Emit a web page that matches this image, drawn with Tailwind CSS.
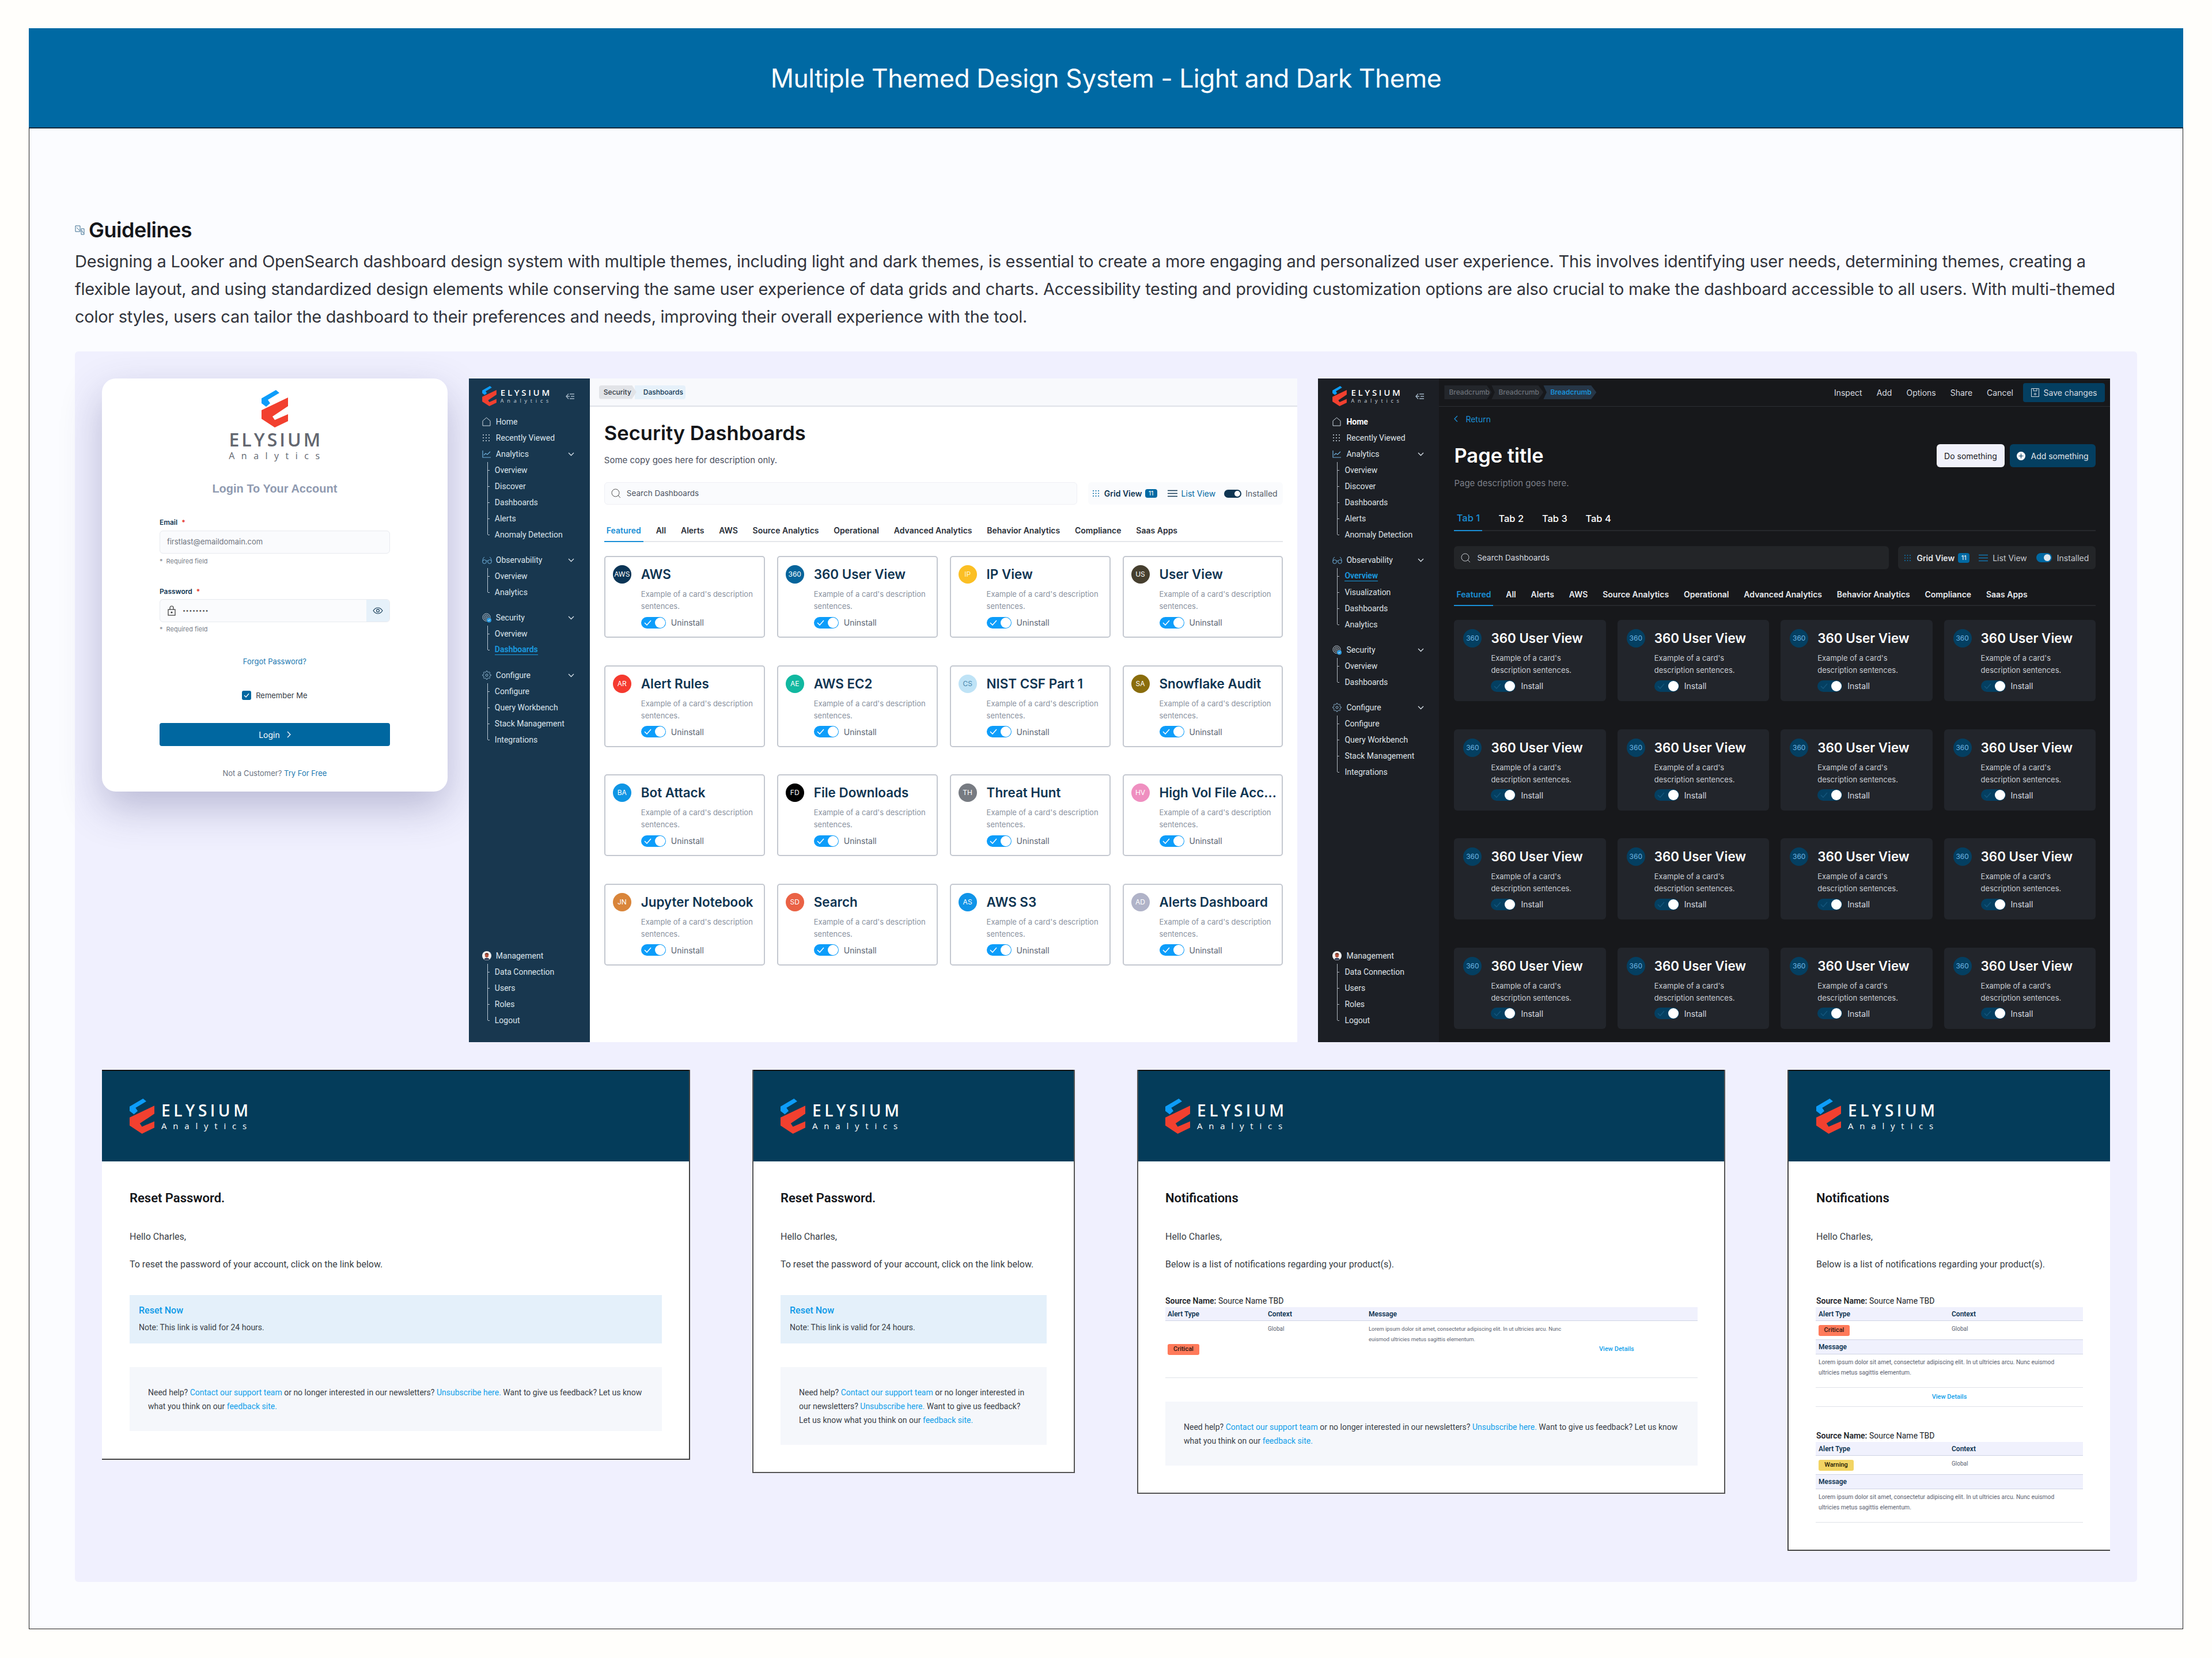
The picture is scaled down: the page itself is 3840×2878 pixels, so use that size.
<!DOCTYPE html>
<html lang="en">
<head>
    <meta charset="UTF-8">
    <title>Multiple Themed Design System</title>
    <script src="https://cdn.jsdelivr.net/npm/@tailwindcss/browser@4"></script>
</head>
<body class="bg-[#fffefb] w-[3840px] h-[2878px] pt-[49px] pl-[50px] overflow-hidden [font-family:Inter,sans-serif]">

<div class="w-[3740px] h-[2779px] bg-[#fbfcff] border border-[#222] border-t-0">

    <header class="h-[174px] -mx-px pt-[3px] bg-[#0069a3] flex items-center justify-center text-white text-[44.5px] -tracking-[0.5px] border-b-2 border-[#0b2a3d]">
        Multiple Themed Design System - Light and Dark Theme
    </header>

    <section class="pl-[79px] pt-[154px]">
        <h2 class="flex items-center gap-[7px] text-[36px] leading-[44px] font-semibold text-[#14161a] -tracking-[0.5px]">
            <svg class="w-[17px] h-[17px]" viewBox="0 0 17 17" fill="none" stroke="#3b6d8f" stroke-width="1"><path d="M1 1h8v10H1zM11 6h5v10h-5zM3 4l5 5M12 9l3 5"/></svg>
            Guidelines
        </h2>
        <p class="mt-[9px] w-[3580px] text-[29px] leading-[48px] text-[#32353d] -tracking-[0.27px]">Designing a Looker and OpenSearch dashboard design system with multiple themes, including light and dark themes, is essential to create a more engaging and personalized user experience. This involves identifying user needs, determining themes, creating a flexible layout, and using standardized design elements while conserving the same user experience of data grids and charts. Accessibility testing and providing customization options are also crucial to make the dashboard accessible to all users. With multi-themed color styles, users can tailor the dashboard to their preferences and needs, improving their overall experience with the tool.</p>
    </section>

    <section class="ml-[79px] mt-[36px] w-[3580px] h-[2136px] bg-[#f0f0fe] rounded-md pl-[47px] pr-[47px] pt-[47px]">

        <div class="flex gap-[36px] h-[1152px] items-start">

            <!-- login -->
            <div class="w-[600px] h-[717px] mr-px bg-white rounded-[24px] shadow-[0_28px_70px_rgba(60,60,120,0.3)] flex flex-col items-center pt-[20px]">
                <div id="login-logo" class="flex flex-col items-center"></div>
                <h3 class="mt-[34px] text-[20px] leading-[24px] font-bold text-[#8f9ab0] [font-family:'Liberation_Sans',sans-serif]">Login To Your Account</h3>
                <div class="w-[400px] mt-[39px]">
                    <label class="block text-[12px] leading-[16px] font-semibold text-[#0f3552]">Email <span class="text-[#e5342b] ml-[4px]">*</span></label>
                    <div class="mt-[6px] h-[40px] flex items-center px-[12px] bg-[#fafbfd] border border-[#e8eaef] rounded-md text-[13px] text-[#70757f]">firstlast@emaildomain.com</div>
                    <p class="mt-[6px] text-[11px] leading-[14px] text-[#7a7f8a]">*&nbsp;&nbsp;Required field</p>
                    <label class="block mt-[38px] text-[12px] leading-[16px] font-semibold text-[#0f3552]">Password <span class="text-[#e5342b] ml-[4px]">*</span></label>
                    <div class="mt-[5px] h-[40px] flex items-center bg-[#fafbfd] border border-[#e8eaef] rounded-md overflow-hidden">
                        <svg class="ml-[13px] w-[14px] h-[18px]" viewBox="0 0 14 18" fill="none" stroke="#333" stroke-width="1.2"><rect x="1" y="7" width="12" height="10"/><path d="M4 7V4a3 3 0 0 1 6 0v3"/><circle cx="7" cy="12" r="1" fill="#333"/></svg>
                        <span class="ml-[12px] flex-1 text-[9px] tracking-[0.6px] text-[#555]">••••••••</span>
                        <span class="w-[40px] h-full bg-[#e6f1fa] flex items-center justify-center">
                            <svg class="w-[18px] h-[12px]" viewBox="0 0 18 12" fill="none" stroke="#0f3552" stroke-width="1.1"><path d="M1 6c2-3 5-5 8-5s6 2 8 5c-2 3-5 5-8 5S3 9 1 6z"/><circle cx="9" cy="6" r="2.4"/></svg>
                        </span>
                    </div>
                    <p class="mt-[5px] text-[11px] leading-[14px] text-[#7a7f8a]">*&nbsp;&nbsp;Required field</p>
                </div>
                <a class="mt-[40px] text-[13px] leading-[18px] text-[#1a78b0]">Forgot Password?</a>
                <div class="mt-[41px] flex items-center gap-[8px] text-[13px] leading-[18px] text-[#333a44]">
                    <span class="w-[16px] h-[16px] rounded-[3px] bg-[#0067a0] flex items-center justify-center">
                        <svg class="w-[10px] h-[8px]" viewBox="0 0 10 8" fill="none" stroke="white" stroke-width="1.3"><path d="M1 4l3 3 5-6"/></svg>
                    </span>
                    Remember Me
                </div>
                <button class="mt-[39px] w-[400px] h-[40px] rounded bg-[#0067a0] text-white text-[14px] flex items-center justify-center gap-[12px]">
                    Login
                    <svg class="w-[7px] h-[12px]" viewBox="0 0 7 12" fill="none" stroke="white" stroke-width="1.3"><path d="M1 1l5 5-5 5"/></svg>
                </button>
                <p class="mt-[38px] text-[13px] leading-[18px] text-[#6b7280]">Not a Customer? <span class="text-[#1a78b0]">Try For Free</span></p>
            </div>

            <!-- light dashboard -->
            <div class="w-[1439px] h-[1152px] bg-white flex">
                <aside id="light-side" class="w-[210px] bg-[#18374f] flex flex-col justify-between pb-[24px] pl-[23px] pr-[27px] [font-family:Roboto,sans-serif]"></aside>
                <div class="flex-1">
                    <div class="h-[49px] bg-[#f8f9fc] border-b-2 border-[#dfe2e8] flex items-center pl-[16px]">
                        <span class="h-[24px] w-[65px] pl-[8px] flex items-center bg-[#e2e4e8] rounded-l text-[12px] font-medium text-[#333a44] [clip-path:polygon(0_0,88%_0,100%_50%,88%_100%,0_100%)]">Security</span>
                        <span class="h-[24px] w-[88px] -ml-[3px] pl-[15px] flex items-center bg-[#e6f1fa] rounded-r text-[12px] font-medium text-[#0f3552]">Dashboards</span>
                    </div>
                    <div class="px-[25px]">
                        <h1 class="mt-[26px] text-[34.5px] leading-[40px] font-semibold text-[#14161a]">Security Dashboards</h1>
                        <p class="mt-[17px] text-[15px] leading-[20px] text-[#4b5160]">Some copy goes here for description only.</p>
                        <div class="mt-[28px] flex gap-[19px]">
                            <div class="w-[821px] h-[39px] bg-[#fafbfd] border border-[#eff0f5] rounded-md flex items-center pl-[11px] gap-[10px] text-[13.5px] text-[#4b5160]">
                                <svg class="w-[17px] h-[17px]" viewBox="0 0 17 17" fill="none" stroke="#555" stroke-width="1"><circle cx="7.5" cy="7.5" r="6.5"/><path d="M12 12l4 4"/></svg>
                                Search Dashboards
                            </div>
                            <div class="flex-1 h-[39px] bg-[#fafbfd] rounded-md flex items-center pl-[7px] text-[14px]">
                                <svg class="w-[13px] h-[13px]" viewBox="0 0 13 13" fill="#0069a3"><circle cx="2" cy="2" r="1"/><circle cx="6.5" cy="2" r="1"/><circle cx="11" cy="2" r="1"/><circle cx="2" cy="6.5" r="1"/><circle cx="6.5" cy="6.5" r="1"/><circle cx="11" cy="6.5" r="1"/><circle cx="2" cy="11" r="1"/><circle cx="6.5" cy="11" r="1"/><circle cx="11" cy="11" r="1"/></svg>
                                <span class="ml-[8px] font-semibold text-[#0f3552]">Grid View</span>
                                <span class="ml-[5px] w-[21px] h-[15px] rounded-sm bg-[#0069a3] text-white text-[11px] flex items-center justify-center">11</span>
                                <svg class="ml-[18px] w-[17px] h-[13px]" viewBox="0 0 17 13" stroke="#0f3552" stroke-width="1.5"><path d="M0 1.5h17M0 6.5h17M0 11.5h17"/></svg>
                                <span class="ml-[7px] text-[#0069a3]">List View</span>
                                <span class="ml-[15px] w-[30px] h-[14px] rounded-full bg-[#0f3552] flex items-center justify-end pr-[2px]"><span class="w-[10px] h-[10px] rounded-full bg-white"></span></span>
                                <span class="ml-[7px] text-[#555c68]">Installed</span>
                            </div>
                        </div>
                        <div id="light-tabs" class="mt-[25px] h-[40px] flex gap-[17.8px] border-b-2 border-[#e5e7eb]"></div>
                        <div id="light-cards" class="mt-[24px] grid grid-cols-4 gap-x-[21px] gap-y-[47.5px]"></div>
                    </div>
                </div>
            </div>

            <!-- dark dashboard -->
            <div class="w-[1375px] h-[1152px] bg-[#17181b] flex">
                <aside id="dark-side" class="w-[210px] bg-[#1c1f25] flex flex-col justify-between pb-[24px] pl-[25px] pr-[26px] [font-family:Roboto,sans-serif]"></aside>
                <div class="flex-1">
                    <div class="h-[49px] border-b border-[#2c2e33] flex items-center pl-[9px] pr-[9px] text-[14px] text-[#d8dbe0]">
                        <span class="h-[24px] w-[82px] pl-[8px] flex items-center bg-[#23262b] text-[12px] font-medium text-[#6b7078] [clip-path:polygon(0_0,90%_0,100%_50%,90%_100%,0_100%)]">Breadcrumb</span>
                        <span class="h-[24px] w-[90px] pl-[12px] flex items-center bg-[#23262b] text-[12px] font-medium text-[#6b7078] [clip-path:polygon(0_0,90%_0,100%_50%,90%_100%,0_100%,6%_50%)]">Breadcrumb</span>
                        <span class="h-[24px] w-[92px] pl-[12px] flex items-center bg-[#263647] text-[12px] font-semibold text-[#1a8fd6] [clip-path:polygon(0_0,90%_0,100%_50%,90%_100%,0_100%,6%_50%)]">Breadcrumb</span>
                        <span class="ml-auto">Inspect</span>
                        <span class="ml-[25px]">Add</span>
                        <span class="ml-[25px]">Options</span>
                        <span class="ml-[25px]">Share</span>
                        <span class="ml-[25px]">Cancel</span>
                        <span class="ml-[17px] h-[33px] w-[142px] bg-[#043f61] rounded flex items-center justify-center gap-[8px]">
                            <svg class="w-[14px] h-[15px]" viewBox="0 0 14 15" fill="none" stroke="#d8dbe0"><path d="M.5.5h13v14H.5zM4 .5v4h6v-4"/><circle cx="7" cy="10" r="1.5"/></svg>
                            Save changes
                        </span>
                    </div>
                    <div class="pl-[26px] pr-[25px]">
                        <div class="mt-[11px] flex items-center gap-[13px] h-[20px] text-[14px] text-[#1a8fd6]">
                            <svg class="w-[7px] h-[12px]" viewBox="0 0 7 12" fill="none" stroke="#1a8fd6" stroke-width="1.3"><path d="M6 1L1 6l5 5"/></svg>
                            Return
                        </div>
                        <div class="mt-[34px] flex justify-between items-start pr-0 h-[40px]">
                            <h1 class="text-[34.5px] leading-[40px] font-semibold text-white">Page title</h1>
                            <div class="flex gap-[9px] text-[14px]">
                                <span class="h-[40px] w-[118px] bg-[#f1f1fb] rounded-md flex items-center justify-center text-[#17181b]">Do something</span>
                                <span class="h-[40px] w-[149px] bg-[#043f61] rounded-md flex items-center justify-center gap-[9px] text-[#e3e6ea]">
                                    <svg class="w-[15px] h-[15px]" viewBox="0 0 15 15"><circle cx="7.5" cy="7.5" r="7.5" fill="white"/><path d="M7.5 3.5v8M3.5 7.5h8" stroke="#043f61" stroke-width="1.2"/></svg>
                                    Add something
                                </span>
                            </div>
                        </div>
                        <p class="mt-[18px] text-[15px] leading-[20px] text-[#7b7f88]">Page description goes here.</p>
                        <div class="mt-[31px] h-[42px] flex border-b-2 border-[#26282c] text-[16.5px] font-medium text-white">
                            <span class="w-[49px] pb-[2px] flex items-center justify-center text-[#1a8fd6] border-b-2 border-[#1a8fd6] -mb-[2px]">Tab 1</span>
                            <span class="ml-[28px] w-[75.5px] flex items-center">Tab 2</span>
                            <span class="w-[75.5px] flex items-center">Tab 3</span>
                            <span class="w-[75.5px] flex items-center">Tab 4</span>
                        </div>
                        <div class="mt-[26px] flex gap-[16px]">
                            <div class="w-[755px] h-[40px] bg-[#232528] rounded-md flex items-center pl-[12px] gap-[11px] text-[13.5px] text-[#d8dbe0]">
                                <svg class="w-[17px] h-[17px]" viewBox="0 0 17 17" fill="none" stroke="#c5c8ce" stroke-width="1"><circle cx="7.5" cy="7.5" r="6.5"/><path d="M12 12l4 4"/></svg>
                                Search Dashboards
                            </div>
                            <div class="flex-1 h-[40px] bg-[#232528] rounded-md flex items-center pl-[10px] text-[14px]">
                                <svg class="w-[13px] h-[13px]" viewBox="0 0 13 13" fill="#1274ad"><circle cx="2" cy="2" r="1"/><circle cx="6.5" cy="2" r="1"/><circle cx="11" cy="2" r="1"/><circle cx="2" cy="6.5" r="1"/><circle cx="6.5" cy="6.5" r="1"/><circle cx="11" cy="6.5" r="1"/><circle cx="2" cy="11" r="1"/><circle cx="6.5" cy="11" r="1"/><circle cx="11" cy="11" r="1"/></svg>
                                <span class="ml-[9px] font-semibold text-[#e3e6ea]">Grid View</span>
                                <span class="ml-[6px] w-[20px] h-[17px] rounded-sm bg-[#0069a3] text-white text-[11px] flex items-center justify-center">11</span>
                                <svg class="ml-[16px] w-[16px] h-[13px]" viewBox="0 0 16 13" stroke="#1274ad" stroke-width="1.5"><path d="M0 1.5h16M0 6.5h16M0 11.5h16"/></svg>
                                <span class="ml-[8px] text-[#c5c8ce]">List View</span>
                                <span class="ml-[16px] w-[27px] h-[16px] rounded-full bg-[#0069a3] flex items-center justify-end pr-[2px]"><span class="w-[12px] h-[12px] rounded-full bg-[#dfe7ee]"></span></span>
                                <span class="ml-[9px] text-[#c5c8ce]">Installed</span>
                            </div>
                        </div>
                        <div id="dark-tabs" class="mt-[24px] h-[40px] flex gap-[17.8px] border-b-2 border-[#26282c]"></div>
                        <div id="dark-cards" class="mt-[24px] grid grid-cols-4 gap-x-[20px] gap-y-[48.5px]"></div>
                    </div>
                </div>
            </div>
        </div>

        <!-- emails -->
        <div class="mt-[48px] flex justify-between items-start [font-family:Roboto,sans-serif]">

            <div class="w-[1021px] h-[677px] bg-white border-r-2 border-b-2 border-[#444]">
                <div class="email-head h-[159px] bg-[#043c5a] border-t-2 border-[#111] pl-[48px] pt-[48px]"></div>
                <div class="pl-[48px] pr-[47px]">
                    <h3 class="mt-[51px] text-[22px] leading-[26px] font-semibold text-[#14161a]">Reset Password.</h3>
                    <p class="mt-[43px] text-[16px] leading-[22px] text-[#3a3f47]">Hello Charles,</p>
                    <p class="mt-[26px] text-[16px] leading-[22px] text-[#3a3f47]">To reset the password of your account, click on the link below.</p>
                    <div class="mt-[42px] h-[84px] bg-[#e4f0fa] pl-[16px] pt-[16px]">
                        <p class="text-[16px] leading-[22px] font-medium text-[#0d9ae8]">Reset Now</p>
                        <p class="mt-[9px] text-[14px] leading-[18px] text-[#3a3f47]">Note: This link is valid for 24 hours.</p>
                    </div>
                    <div class="email-foot mt-[41px] h-[111px] bg-[#f5f7fb] pl-[32px] pr-[32px] pt-[32px]"></div>
                </div>
            </div>

            <div class="w-[560px] h-[700px] bg-white border-x-2 border-b-2 border-[#555]">
                <div class="email-head h-[159px] bg-[#043c5a] border-t-2 border-[#111] pl-[47px] pt-[48px]"></div>
                <div class="pl-[47px] pr-[47px]">
                    <h3 class="mt-[51px] text-[22px] leading-[26px] font-semibold text-[#14161a]">Reset Password.</h3>
                    <p class="mt-[43px] text-[16px] leading-[22px] text-[#3a3f47]">Hello Charles,</p>
                    <p class="mt-[26px] text-[16px] leading-[22px] text-[#3a3f47]">To reset the password of your account, click on the link below.</p>
                    <div class="mt-[42px] h-[84px] bg-[#e4f0fa] pl-[16px] pt-[16px]">
                        <p class="text-[16px] leading-[22px] font-medium text-[#0d9ae8]">Reset Now</p>
                        <p class="mt-[9px] text-[14px] leading-[18px] text-[#3a3f47]">Note: This link is valid for 24 hours.</p>
                    </div>
                    <div class="email-foot-narrow mt-[41px] h-[135px] bg-[#f5f7fb] pl-[32px] pr-[32px] pt-[32px]"></div>
                </div>
            </div>

            <div class="w-[1021px] h-[736px] bg-white border-x-2 border-b-2 border-[#555]">
                <div class="email-head h-[159px] bg-[#043c5a] border-t-2 border-[#111] pl-[47px] pt-[48px]"></div>
                <div class="pl-[47px] pr-[46px]">
                    <h3 class="mt-[51px] text-[22px] leading-[26px] font-semibold text-[#14161a]">Notifications</h3>
                    <p class="mt-[43px] text-[16px] leading-[22px] text-[#3a3f47]">Hello Charles,</p>
                    <p class="mt-[26px] text-[16px] leading-[22px] text-[#3a3f47]">Below is a list of notifications regarding your product(s).</p>
                    <p class="mt-[43px] text-[14px] leading-[18px] text-[#22252b]"><b class="font-semibold">Source Name:</b> Source Name TBD</p>
                    <div class="mt-[2px] h-[24px] bg-[#f0f1fd] border-b border-[#cfd4e4] grid grid-cols-[174px_175px_1fr] items-center pl-[4px] text-[12px] font-semibold text-[#0f3552]">
                        <span>Alert Type</span><span>Context</span><span>Message</span>
                    </div>
                    <div class="h-[99px] border-b border-[#dfe2e8] grid grid-cols-[174px_175px_400px_1fr] pl-[4px] text-[9.4px] leading-[18px] text-[#5b6270]">
                        <span class="self-center w-[55px] h-[19px] rounded-[3px] bg-[#ff7a5a] text-[#2a1410] text-[11px] font-medium flex items-center justify-center">Critical</span>
                        <span class="pt-[5px] text-[10px]">Global</span>
                        <span class="pt-[5px]">Lorem ipsum dolor sit amet, consectetur adipiscing elit. In ut ultricies arcu. Nunc<br>euismod ultricies metus sagittis elementum.</span>
                        <span class="self-center text-[11px] font-medium text-[#12a0ea]">View Details</span>
                    </div>
                    <div class="email-foot mt-[41px] h-[111px] bg-[#f5f7fb] pl-[32px] pr-[32px] pt-[32px]"></div>
                </div>
            </div>

            <div class="w-[560px] h-[835px] bg-white border-l-2 border-b-2 border-[#444]">
                <div class="email-head h-[159px] bg-[#043c5a] border-t-2 border-[#111] pl-[48px] pt-[48px]"></div>
                <div class="pl-[48px] pr-[47px]">
                    <h3 class="mt-[51px] text-[22px] leading-[26px] font-semibold text-[#14161a]">Notifications</h3>
                    <p class="mt-[43px] text-[16px] leading-[22px] text-[#3a3f47]">Hello Charles,</p>
                    <p class="mt-[26px] text-[16px] leading-[22px] text-[#3a3f47]">Below is a list of notifications regarding your product(s).</p>
                    <div id="mobile-alerts"></div>
                </div>
            </div>
        </div>
    </section>
</div>

<script>
    const markSvg = (cls) => `<svg class="${cls}" viewBox="0 0 46 65"><path fill="#0d9dfa" d="M0 14.5 25 0l6 5-20 12 4 6-7 6-8-6z"/><path fill="#f2402f" d="M46 13v15L19 46l4 6 23-10v12L23 65 0 50V35z"/></svg>`;

    function logo(kind) {
        if (kind === 'login') return `
            ${markSvg('w-[46px] h-[65px]')}
            <p class="mt-[3px] ml-[4px] text-[32px] leading-[36px] font-semibold tracking-[4px] text-[#636770] [font-family:'Open_Sans',sans-serif]">ELYSIUM</p>
            <p class="-mt-[1px] ml-[10px] text-[16px] leading-[22px] tracking-[11.5px] text-[#636770] [font-family:'Open_Sans',sans-serif]">Analytics</p>`;
        if (kind === 'mail') return `
            <div class="flex items-center gap-[12px]">
                ${markSvg('w-[43px] h-[61px]')}
                <div class="[font-family:'Open_Sans',sans-serif] text-white">
                    <p class="text-[28px] leading-[32px] font-semibold tracking-[5.5px]">ELYSIUM</p>
                    <p class="mt-[1px] text-[15px] leading-[20px] tracking-[10.8px]">Analytics</p>
                </div>
            </div>`;
        return `
            <div class="h-[61px] flex items-center">
                ${markSvg('w-[25px] h-[35px]')}
                <div class="ml-[7px] [font-family:'Open_Sans',sans-serif] text-white">
                    <p class="text-[15px] leading-[17px] font-semibold tracking-[3.7px]">ELYSIUM</p>
                    <p class="text-[9px] leading-[12px] tracking-[5.8px] text-[#c9d3dc]">Analytics</p>
                </div>
                <svg class="ml-auto w-[15px] h-[12px]" viewBox="0 0 15 12" fill="none" stroke="#9fb2c2" stroke-width="1.4"><path d="M5 1.5 1 6l4 4.5M1 6h6M7 2h8M9 6h6M7 10h8"/></svg>
            </div>`;
    }

    const icons = {
        home: `<svg class="w-[15px] h-[16px]" viewBox="0 0 15 16" fill="none" stroke="currentColor"><path d="M1 15V6.5L7.5 1 14 6.5V15z"/></svg>`,
        dots: `<svg class="w-[14px] h-[14px]" viewBox="0 0 14 14" fill="currentColor"><circle cx="2" cy="2" r="1"/><circle cx="7" cy="2" r="1"/><circle cx="12" cy="2" r="1"/><circle cx="2" cy="7" r="1"/><circle cx="7" cy="7" r="1"/><circle cx="12" cy="7" r="1"/><circle cx="2" cy="12" r="1"/><circle cx="7" cy="12" r="1"/><circle cx="12" cy="12" r="1"/></svg>`,
        chart: `<svg class="w-[15px] h-[14px]" viewBox="0 0 15 14" fill="none" stroke="#6fb0dc" stroke-width="1.2"><path d="M1 1v12h14"/><path d="M3 9l3-3 3 2 5-5"/></svg>`,
        glasses: `<svg class="w-[17px] h-[13px]" viewBox="0 0 17 13" fill="none" stroke="#6fb0dc"><circle cx="4" cy="9" r="3.3"/><circle cx="13" cy="9" r="3.3"/><path d="M7 8c1-1 2-1 3 0M1 8c0-4 1-6 3-7M16 8c0-4-1-6-3-7"/></svg>`,
        print: `<svg class="w-[17px] h-[17px]" viewBox="0 0 17 17" fill="none" stroke="#b9c6d2"><circle cx="7.5" cy="7.5" r="6.5"/><circle cx="7.5" cy="7.5" r="4"/><circle cx="7.5" cy="7.5" r="1.6"/><circle cx="12" cy="12.5" r="4" fill="#2c9be0" stroke="none"/><path d="M10.3 12.5l1.2 1.2 2.1-2.4" stroke="white"/></svg>`,
        gear: `<svg class="w-[16px] h-[16px]" viewBox="0 0 24 24" fill="none" stroke="#8fb6d2" stroke-width="1.5"><circle cx="12" cy="12" r="3"/><path d="M19.4 15a1.65 1.65 0 0 0 .33 1.82l.06.06a2 2 0 0 1 0 2.83 2 2 0 0 1-2.83 0l-.06-.06a1.65 1.65 0 0 0-1.82-.33 1.65 1.65 0 0 0-1 1.51V21a2 2 0 0 1-2 2 2 2 0 0 1-2-2v-.09A1.65 1.65 0 0 0 9 19.4a1.65 1.65 0 0 0-1.82.33l-.06.06a2 2 0 0 1-2.83 0 2 2 0 0 1 0-2.83l.06-.06a1.65 1.65 0 0 0 .33-1.82 1.65 1.65 0 0 0-1.51-1H3a2 2 0 0 1-2-2 2 2 0 0 1 2-2h.09A1.65 1.65 0 0 0 4.6 9a1.65 1.65 0 0 0-.33-1.82l-.06-.06a2 2 0 0 1 0-2.83 2 2 0 0 1 2.83 0l.06.06a1.65 1.65 0 0 0 1.82.33H9a1.65 1.65 0 0 0 1-1.51V3a2 2 0 0 1 2-2 2 2 0 0 1 2 2v.09a1.65 1.65 0 0 0 1 1.51 1.65 1.65 0 0 0 1.82-.33l.06-.06a2 2 0 0 1 2.83 0 2 2 0 0 1 0 2.83l-.06.06a1.65 1.65 0 0 0-.33 1.82V9a1.65 1.65 0 0 0 1.51 1H21a2 2 0 0 1 2 2 2 2 0 0 1-2 2h-.09a1.65 1.65 0 0 0-1.51 1z"/></svg>`,
        face: `<svg class="w-[16px] h-[16px]" viewBox="0 0 16 16"><circle cx="8" cy="8" r="8" fill="#f1f1f1"/><ellipse cx="8" cy="7" rx="3.2" ry="4" fill="#b4533f"/><path d="M4.5 6c0-3 7-3 7 0C10 4.6 6 4.6 4.5 6z" fill="#3a2620"/><path d="M3.5 14c1-3 8-3 9 0-2 2-7 2-9 0z" fill="#2a3550"/></svg>`
    };

    function side(dark, groups, bottom) {
        const labelCls = dark ? 'text-[#dfe2e7]' : 'text-[#dbe4ec]';
        const lineCls = dark ? 'border-[#aeb4bd]' : 'border-[#b8c6d2]';
        const tickCls = dark ? 'bg-[#aeb4bd]' : 'bg-[#b8c6d2]';
        const treeMl = dark ? 'ml-[8px]' : 'ml-[9px]';
        const chev = `<svg class="ml-auto w-[11px] h-[7px]" viewBox="0 0 11 7" fill="none" stroke="#dbe4ec" stroke-width="1.3"><path d="M1 1l4.5 4.5L10 1"/></svg>`;
        const sub = (items, active) => `
            <div class="flex flex-col ${treeMl} border-l ${lineCls} mb-[14px]">
                ${items.map((t, i) => `
                    <div class="flex items-center shrink-0 h-[28px] gap-[9px] text-[14px] ${i === items.length - 1 ? '-mb-[14px]' : ''}">
                        <span class="w-[3px] h-px ${tickCls}"></span>
                        ${t === active ? `<span class="font-semibold text-[#1a9be0] border-b border-[#1a9be0] leading-[17px]">${t}</span>` : `<span class="${labelCls}">${t}</span>`}
                    </div>`).join('')}
            </div>`;
        const row = (g) => `
            <div class="${g.gap ? 'pt-[16px]' : ''}">
                <div class="flex items-center h-[28px] text-[14px] ${labelCls} ${g.bold ? 'font-bold text-white' : ''}">
                    <span class="w-[24px] text-[#cdd8e2]">${icons[g.icon]}</span>${g.label}${g.items || g.chev ? (g.nochev ? '' : chev) : ''}
                </div>
                ${g.items ? sub(g.items, g.active) : ''}
            </div>`;
        return `<div>${logo('side')}<div class="mt-0">${groups.map(row).join('')}</div></div><div>${row(bottom)}</div>`;
    }

    const bottomGroup = { icon: 'face', label: 'Management', nochev: true, items: ['Data Connection', 'Users', 'Roles', 'Logout'] };
    const analyticsGroup = { icon: 'chart', label: 'Analytics', items: ['Overview', 'Discover', 'Dashboards', 'Alerts', 'Anomaly Detection'] };
    const configureGroup = { icon: 'gear', label: 'Configure', gap: 1, items: ['Configure', 'Query Workbench', 'Stack Management', 'Integrations'] };

    document.getElementById('light-side').innerHTML = side(false, [
        { icon: 'home', label: 'Home' }, { icon: 'dots', label: 'Recently Viewed' }, analyticsGroup,
        { icon: 'glasses', label: 'Observability', gap: 1, items: ['Overview', 'Analytics'] },
        { icon: 'print', label: 'Security', gap: 1, items: ['Overview', 'Dashboards'], active: 'Dashboards' },
        configureGroup
    ], bottomGroup);

    document.getElementById('dark-side').innerHTML = side(true, [
        { icon: 'home', label: 'Home', bold: 1 }, { icon: 'dots', label: 'Recently Viewed' }, analyticsGroup,
        { icon: 'glasses', label: 'Observability', gap: 1, items: ['Overview', 'Visualization', 'Dashboards', 'Analytics'], active: 'Overview' },
        { icon: 'print', label: 'Security', gap: 1, items: ['Overview', 'Dashboards'] },
        configureGroup
    ], bottomGroup);

    document.getElementById('login-logo').innerHTML = logo('login');
    document.querySelectorAll('.email-head').forEach(el => el.innerHTML = logo('mail'));

    // line breaks are fixed so each footer wraps where the mock does
    const link = (t) => `<span class="text-[#12a0ea]">${t}</span>`;
    document.querySelectorAll('.email-foot').forEach(el => {
        el.innerHTML = `<p class="text-[14px] leading-[24px] text-[#3a3f47] whitespace-nowrap">Need help? ${link('Contact our support team')} or no longer interested in our newsletters? ${link('Unsubscribe here.')} Want to give us feedback? Let us know<br>what you think on our ${link('feedback site.')}</p>`;
    });
    document.querySelectorAll('.email-foot-narrow').forEach(el => {
        el.innerHTML = `<p class="text-[14px] leading-[24px] text-[#3a3f47] whitespace-nowrap">Need help? ${link('Contact our support team')} or no longer interested in<br>our newsletters? ${link('Unsubscribe here.')} Want to give us feedback?<br>Let us know what you think on our ${link('feedback site.')}</p>`;
    });

    const tabNames = ['Featured', 'All', 'Alerts', 'AWS', 'Source Analytics', 'Operational', 'Advanced Analytics', 'Behavior Analytics', 'Compliance', 'Saas Apps'];
    const tabs = (textCls) => tabNames.map((t, i) => i === 0
        ? `<span class="px-[4px] flex items-center text-[14px] font-semibold text-[#1a8fd6] border-b-2 border-[#1a8fd6] -mb-[2px]">${t}</span>`
        : `<span class="px-[4px] flex items-center text-[14px] font-semibold ${textCls}">${t}</span>`).join('');
    document.getElementById('light-tabs').innerHTML = tabs('text-[#2a2f38]');
    document.getElementById('dark-tabs').innerHTML = tabs('text-[#e8eaee]');

    const lightCards = [
        ['AWS', 'AWS', 'bg-[#0b3556] text-white'], ['360', '360 User View', 'bg-[#06649b] text-white'], ['IP', 'IP View', 'bg-[#fbbf24] text-[#fff3cf]'], ['US', 'User View', 'bg-[#463f2f] text-white'],
        ['AR', 'Alert Rules', 'bg-[#f53a2f] text-white'], ['AE', 'AWS EC2', 'bg-[#11b8a0] text-white'], ['CS', 'NIST CSF Part 1', 'bg-[#bfe3f6] text-[#4a86ab]'], ['SA', 'Snowflake Audit', 'bg-[#8a6d0d] text-white'],
        ['BA', 'Bot Attack', 'bg-[#0f95e4] text-white'], ['FD', 'File Downloads', 'bg-black text-white'], ['TH', 'Threat Hunt', 'bg-[#777b82] text-white'], ['HV', 'High Vol File Acc...', 'bg-[#ef8fc0] text-white'],
        ['JN', 'Jupyter Notebook', 'bg-[#d9853a] text-white'], ['SD', 'Search', 'bg-[#ea6245] text-white'], ['AS', 'AWS S3', 'bg-[#1094e8] text-white'], ['AD', 'Alerts Dashboard', 'bg-[#b0b3c8] text-white']
    ];
    document.getElementById('light-cards').innerHTML = lightCards.map(([a, t, c]) => `
        <div class="h-[142px] border-2 border-[#c4c8d0] rounded-[5px] pl-[13px] pt-[14px] flex gap-[17px]">
            <span class="w-[32px] h-[32px] shrink-0 rounded-full ${c} flex items-center justify-center text-[12px]">${a}</span>
            <div class="min-w-0">
                <p class="h-[32px] flex items-center text-[22.4px] font-semibold text-[#0f3552] whitespace-nowrap">${t}</p>
                <p class="mt-[8px] text-[13px] leading-[21px] text-[#8a92a0] w-[200px]">Example of a card's description sentences.</p>
                <div class="mt-[7px] flex items-center gap-[9px] text-[14px] text-[#5b6472]">
                    <span class="w-[43px] h-[20px] rounded-full bg-[#0d9dfa] flex items-center justify-between pl-[5px] pr-px">
                        <svg class="w-[13px] h-[10px]" viewBox="0 0 13 10" fill="none" stroke="white" stroke-width="1.5"><path d="M1 5l4 4 7-8"/></svg>
                        <span class="w-[18px] h-[18px] rounded-full bg-white"></span>
                    </span>
                    Uninstall
                </div>
            </div>
        </div>`).join('');

    document.getElementById('dark-cards').innerHTML = Array(16).fill(0).map(() => `
        <div class="h-[141px] bg-[#22252b] rounded-md pl-[16px] pt-[16px] flex gap-[16px]">
            <span class="w-[32px] h-[32px] shrink-0 rounded-full bg-[#043f61] text-[#6cb5e3] flex items-center justify-center text-[12px]">360</span>
            <div class="min-w-0">
                <p class="h-[32px] flex items-center text-[22.4px] font-semibold text-white whitespace-nowrap">360 User View</p>
                <p class="mt-[8px] text-[13px] leading-[21px] text-[#c9ccd2] w-[180px]">Example of a card's description sentences.</p>
                <div class="mt-[6px] flex items-center gap-[9px] text-[14px] text-[#d8dbe0]">
                    <span class="w-[43px] h-[20px] rounded-full bg-[#043f61] flex items-center justify-between pl-[5px] pr-px">
                        <svg class="w-[13px] h-[10px]" viewBox="0 0 13 10" fill="none" stroke="#14567c" stroke-width="1.5"><path d="M1 5l4 4 7-8"/></svg>
                        <span class="w-[18px] h-[18px] rounded-full bg-white"></span>
                    </span>
                    Install
                </div>
            </div>
        </div>`).join('');

    const alertBlock = (badge, badgeCls, w, last) => `
        <p class="${last ? 'mt-[41px]' : 'mt-[43px]'} text-[14px] leading-[18px] text-[#22252b]"><b class="font-semibold">Source Name:</b> Source Name TBD</p>
        <div class="mt-[2px] -ml-px h-[24px] bg-[#f0f1fd] border-b border-[#cfd4e4] grid grid-cols-[231px_1fr] items-center pl-[5px] text-[12px] font-semibold text-[#0f3552]">
            <span>Alert Type</span><span>Context</span>
        </div>
        <div class="-ml-px h-[33px] border-b border-[#cfd4e4] grid grid-cols-[231px_1fr] pl-[5px] text-[10px] text-[#5b6270]">
            <span class="mt-[7px] ${w} h-[19px] rounded-[3px] ${badgeCls} text-[11px] font-medium flex items-center justify-center">${badge}</span>
            <span class="pt-[7px] leading-[14px]">Global</span>
        </div>
        <div class="-ml-px h-[25px] bg-[#f0f1fd] border-b border-[#cfd4e4] flex items-center pl-[5px] text-[12px] font-semibold text-[#0f3552]">Message</div>
        <div class="-ml-px h-[58px] border-b border-[#dfe2e8] pl-[5px] pt-[5px] pr-[20px] text-[10.3px] leading-[18px] text-[#5b6270]">Lorem ipsum dolor sit amet, consectetur adipiscing elit. In ut ultricies arcu. Nunc euismod<br>ultricies metus sagittis elementum.</div>`;
    document.getElementById('mobile-alerts').innerHTML =
        alertBlock('Critical', 'bg-[#ff7a5a] text-[#2a1410]', 'w-[54px]', false) +
        `<div class="-ml-px h-[33px] border-b border-[#dfe2e8] flex items-center justify-center text-[11px] font-medium text-[#12a0ea]">View Details</div>` +
        alertBlock('Warning', 'bg-[#f2d463] text-[#1f1a05]', 'w-[61px]', true);
</script>
</body>
</html>
